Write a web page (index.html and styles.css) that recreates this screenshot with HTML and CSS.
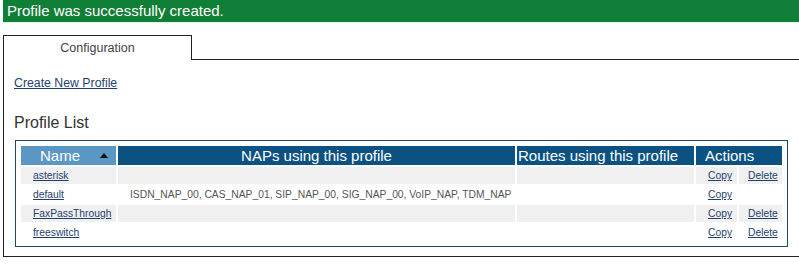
FILE: index.html
```html
<!DOCTYPE html>
<html lang="en">
<head>
    <meta charset="UTF-8">
    <title>Profiles</title>
    <link rel="stylesheet" href="styles.css">
</head>
<body>
    <div class="notice">Profile was successfully created.</div>

    <div class="tabs">
        <div class="tab active">Configuration</div>
        <div class="tab-fill"></div>
    </div>

    <div class="panel">
        <a href="#" class="create-link">Create New Profile</a>
        <h2>Profile List</h2>

        <div class="list-box">
            <table class="profile-table">
                <colgroup>
                    <col class="col-name">
                    <col class="col-naps">
                    <col class="col-routes">
                    <col class="col-copy">
                    <col class="col-delete">
                </colgroup>
                <thead>
                    <tr>
                        <th class="sorted"><span class="th-name">Name <span class="arrow-up"></span></span></th>
                        <th>NAPs using this profile</th>
                        <th class="th-left">Routes using this profile</th>
                        <th colspan="2" class="th-left th-actions">Actions</th>
                    </tr>
                </thead>
                <tbody>
                    <tr class="odd">
                        <td><a href="#">asterisk</a></td>
                        <td></td>
                        <td></td>
                        <td><a href="#">Copy</a></td>
                        <td class="del"><a href="#">Delete</a></td>
                    </tr>
                    <tr>
                        <td><a href="#">default</a></td>
                        <td>ISDN_NAP_00, CAS_NAP_01, SIP_NAP_00, SIG_NAP_00, VoIP_NAP, TDM_NAP</td>
                        <td></td>
                        <td><a href="#">Copy</a></td>
                        <td class="del"></td>
                    </tr>
                    <tr class="odd">
                        <td><a href="#">FaxPassThrough</a></td>
                        <td></td>
                        <td></td>
                        <td><a href="#">Copy</a></td>
                        <td class="del"><a href="#">Delete</a></td>
                    </tr>
                    <tr>
                        <td><a href="#">freeswitch</a></td>
                        <td></td>
                        <td></td>
                        <td><a href="#">Copy</a></td>
                        <td class="del"><a href="#">Delete</a></td>
                    </tr>
                </tbody>
            </table>
        </div>
    </div>
</body>
</html>
```

FILE: styles.css
```css
body {
    margin: 0;
    font-family: "Liberation Sans", Arial, sans-serif;
    background: white;
    color: #333;
    overflow: hidden;
}
.notice {
    margin-left: 3px;
    height: 22px;
    line-height: 22px;
    padding-left: 4px;
    background-color: #0f7e37;
    border-bottom: 1px solid #e4f6ea;
    color: white;
    font-size: 15px;
}
.tabs {
    display: flex;
    margin-top: 12px;
    margin-left: 3px;
}
.tab {
    width: 187px;
    height: 24px;
    line-height: 24px;
    text-align: center;
    font-size: 12.5px;
    color: #444;
    border: 1px solid #222;
    border-bottom: none;
}
.tab-fill {
    flex: 1;
    border-bottom: 1px solid #222;
}
.panel {
    margin-left: 3px;
    border-left: 1px solid #222;
    border-bottom: 1px solid #222;
    padding: 13px 10px 9px 11px;
}
.create-link {
    font-size: 12.3px;
    color: #1f3f6e;
    margin-left: -1px;
}
h2 {
    margin: 23px 0 8px -1px;
    font-size: 16px;
    font-weight: normal;
    color: #333;
}
.list-box {
    width: fit-content;
    border: 1px solid #1c4a5e;
    padding: 3px;
}
.profile-table {
    table-layout: fixed;
    width: 765px;
    border-spacing: 2px;
    font-size: 10.3px;
}
.col-name { width: 95px; }
.col-naps { width: 397px; }
.col-routes { width: 177px; }
.col-copy { width: 41px; }
.col-delete { width: 43px; }
.profile-table th {
    height: 19px;
    padding: 0;
    background-color: #0b5283;
    color: white;
    font-size: 15px;
    font-weight: normal;
    text-align: center;
}
.profile-table th.sorted {
    background-color: #5b97c4;
}
.th-name {
    display: flex;
    justify-content: space-between;
    align-items: center;
    padding: 0 8px 0 19px;
}
.arrow-up {
    width: 0;
    height: 0;
    border-left: 4px solid transparent;
    border-right: 4px solid transparent;
    border-bottom: 5px solid #111;
}
.profile-table th.th-left {
    text-align: left;
    padding-left: 1px;
}
.profile-table th.th-actions {
    padding-left: 9px;
}
.profile-table td {
    height: 17px;
    padding: 0 0 0 12px;
    color: #555;
    white-space: nowrap;
    overflow: hidden;
}
.profile-table td.del {
    padding-left: 9px;
}
.profile-table tr.odd td {
    background-color: #f0f0f0;
}
.profile-table a {
    color: #1f3f6e;
}
```
